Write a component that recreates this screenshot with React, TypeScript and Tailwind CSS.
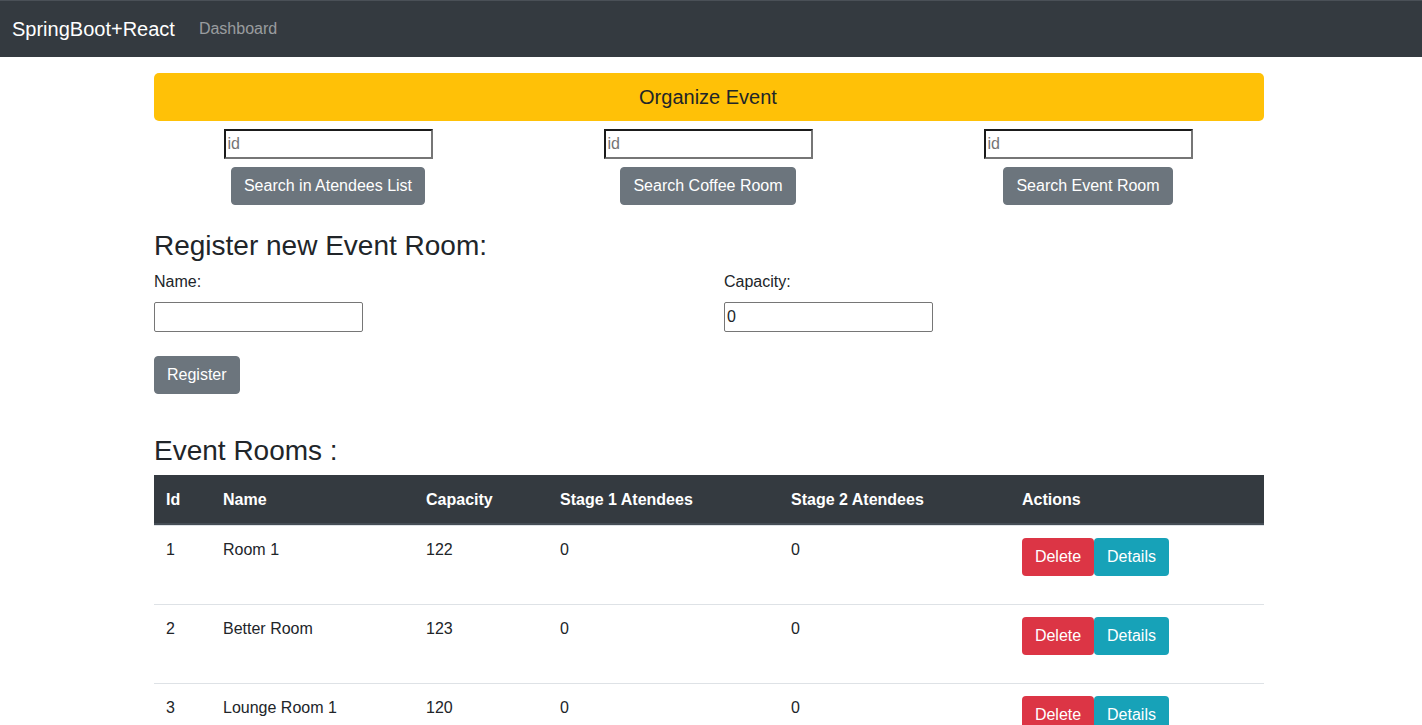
import React, { useState } from 'react';

interface EventRoom {
  id: number;
  name: string;
  capacity: number;
  stage1: number;
  stage2: number;
}

const rooms: EventRoom[] = [
  { id: 1, name: 'Room 1', capacity: 122, stage1: 0, stage2: 0 },
  { id: 2, name: 'Better Room', capacity: 123, stage1: 0, stage2: 0 },
  { id: 3, name: 'Lounge Room 1', capacity: 120, stage1: 0, stage2: 0 },
];

const grayBtn =
  'bg-[#6c757d] text-white text-[16px] leading-[24px] px-[12px] py-[6px] rounded-[4px] border border-[#6c757d]';

const SearchBox: React.FC<{ label: string }> = ({ label }) => (
  <div className="flex flex-col items-center px-[15px]">
    <input
      placeholder="id"
      className="w-[209px] h-[30px] px-[2px] text-[16px] bg-white border-2 border-t-[#1b1b1b] border-l-[#1b1b1b] border-b-[#767676] border-r-[#767676] placeholder:text-[#757575] outline-none"
    />
    <button className={`${grayBtn} mt-[8px]`}>{label}</button>
  </div>
);

const App: React.FC = () => {
  const [name, setName] = useState('');
  const [capacity, setCapacity] = useState('0');

  return (
    <div className="min-h-screen bg-white text-[#212529]" style={{ fontFamily: '"Liberation Sans", Arial, sans-serif' }}>
      {/* Navbar */}
      <nav className="h-[57px] bg-[#343a40] border-t border-[#4a5057] flex items-center px-[12px]">
        <span className="text-white text-[20px] leading-[30px] mr-[16px]">SpringBoot+React</span>
        <span className="text-[rgba(255,255,255,0.5)] text-[16px] px-[8px]">Dashboard</span>
      </nav>

      <div className="pr-[4px]">
        <div className="w-[1110px] mx-auto">
          <button className="mt-[16px] w-full h-[48px] bg-[#ffc107] rounded-[5px] text-[20px] text-[#212529] pr-[2px]">
            Organize Event
          </button>

          {/* Search row */}
          <div className="-ml-[16px] -mr-[14px] grid grid-cols-3 mt-[8px]">
            <SearchBox label="Search in Atendees List" />
            <SearchBox label="Search Coffee Room" />
            <SearchBox label="Search Event Room" />
          </div>

          {/* Register form */}
          <h3 className="text-[28px] leading-[1.2] mt-[24px] mb-[7px]">Register new Event Room:</h3>
          <div className="-mx-[15px] grid grid-cols-2">
            <div className="px-[15px]">
              <label className="block text-[16px] leading-[24px] mb-[8px]">Name:</label>
              <input
                value={name}
                onChange={e => setName(e.target.value)}
                className="w-[209px] h-[30px] px-[2px] text-[16px] border border-[#767676] rounded-[2px] outline-none"
              />
            </div>
            <div className="px-[15px]">
              <label className="block text-[16px] leading-[24px] mb-[8px]">Capacity:</label>
              <input
                value={capacity}
                onChange={e => setCapacity(e.target.value)}
                className="w-[209px] h-[30px] px-[2px] text-[16px] border border-[#767676] rounded-[2px] outline-none"
              />
            </div>
          </div>
          <button className={`${grayBtn} mt-[24px]`}>Register</button>

          {/* Rooms table */}
          <h3 className="text-[28px] leading-[1.2] mt-[40px] mb-[8px]">Event Rooms :</h3>
          <table className="w-full border-separate border-spacing-0 text-[16px] leading-[24px] table-fixed">
            <thead>
              <tr className="bg-[#343a40] text-white text-left">
                <th className="w-[57px] px-[12px] pt-[13px] pb-[11px] font-bold border-b-2 border-[#454d55]">Id</th>
                <th className="w-[203px] px-[12px] pt-[13px] pb-[11px] font-bold border-b-2 border-[#454d55]">Name</th>
                <th className="w-[134px] px-[12px] pt-[13px] pb-[11px] font-bold border-b-2 border-[#454d55]">Capacity</th>
                <th className="w-[231px] px-[12px] pt-[13px] pb-[11px] font-bold border-b-2 border-[#454d55]">Stage 1 Atendees</th>
                <th className="w-[231px] px-[12px] pt-[13px] pb-[11px] font-bold border-b-2 border-[#454d55]">Stage 2 Atendees</th>
                <th className="px-[12px] pt-[13px] pb-[11px] font-bold border-b-2 border-[#454d55]">Actions</th>
              </tr>
            </thead>
            <tbody>
              {rooms.map(room => (
                <tr key={room.id}>
                  <td className="p-[12px] h-[79px] align-top border-t border-[#dee2e6]">{room.id}</td>
                  <td className="p-[12px] align-top border-t border-[#dee2e6]">{room.name}</td>
                  <td className="p-[12px] align-top border-t border-[#dee2e6]">{room.capacity}</td>
                  <td className="p-[12px] align-top border-t border-[#dee2e6]">{room.stage1}</td>
                  <td className="p-[12px] align-top border-t border-[#dee2e6]">{room.stage2}</td>
                  <td className="p-[12px] align-top border-t border-[#dee2e6]">
                    <div className="flex">
                      <button className="bg-[#dc3545] text-white px-[12px] py-[7px] rounded-[4px] w-[72px]">Delete</button>
                      <button className="bg-[#17a2b8] text-white px-[12px] py-[7px] rounded-[4px] w-[75px]">Details</button>
                    </div>
                  </td>
                </tr>
              ))}
            </tbody>
          </table>
        </div>
      </div>
    </div>
  );
};

export default App;
